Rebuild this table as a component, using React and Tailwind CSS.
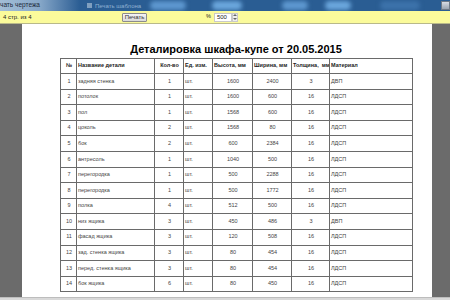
import React from "react";

const rows = [
  ["1", "задняя стенка", "1", "шт.", "1600", "2400", "3", "ДВП"],
  ["2", "потолок", "1", "шт.", "1600", "600", "16", "ЛДСП"],
  ["3", "пол", "1", "шт.", "1568", "600", "16", "ЛДСП"],
  ["4", "цоколь", "2", "шт.", "1568", "80", "16", "ЛДСП"],
  ["5", "бок", "2", "шт.", "600", "2384", "16", "ЛДСП"],
  ["6", "антресоль", "1", "шт.", "1040", "500", "16", "ЛДСП"],
  ["7", "перегородка", "1", "шт.", "500", "2288", "16", "ЛДСП"],
  ["8", "перегородка", "1", "шт.", "500", "1772", "16", "ЛДСП"],
  ["9", "полка", "4", "шт.", "512", "500", "16", "ЛДСП"],
  ["10", "низ ящика", "3", "шт.", "450", "486", "3", "ДВП"],
  ["11", "фасад ящика", "3", "шт.", "120", "508", "16", "ЛДСП"],
  ["12", "зад. стенка ящика", "3", "шт.", "80", "454", "16", "ЛДСП"],
  ["13", "перед. стенка ящика", "3", "шт.", "80", "454", "16", "ЛДСП"],
  ["14", "бок ящика", "6", "шт.", "80", "450", "16", "ЛДСП"],
];

const widths = [16, 78, 29, 29, 40, 39, 38, 83];
const align = ["text-center", "text-left", "text-center", "text-left", "text-center", "text-center", "text-center", "text-left"];

export default function App() {
  return (
    <div className="w-[450px] h-[300px] overflow-hidden flex flex-col font-['Liberation_Sans',Arial,sans-serif] bg-white">
      {/* window title bar */}
      <div className="h-[11px] shrink-0 relative flex items-center bg-[#2a5d93] overflow-hidden">
        <div className="absolute left-0 top-0 w-[80px] h-[11px] bg-linear-to-r from-[#a3bdd6] via-[#86a7c8] to-[#2a5d93]" />
        <div className="absolute left-[150px] top-[1px] w-[36px] h-[9px] rounded-full bg-[#5d97cf] blur-[2px]" />
        <div className="absolute left-[212px] top-[1px] w-[30px] h-[9px] rounded-full bg-[#6aa6dc] blur-[2px]" />
        <div className="absolute left-[282px] top-[1px] w-[26px] h-[9px] rounded-full bg-[#5d97cf] blur-[2px]" />
        <div className="absolute left-[325px] top-[1px] w-[26px] h-[9px] rounded-full bg-[#6aa6dc] blur-[2px]" />
        <div className="absolute left-[380px] top-[1px] w-[40px] h-[9px] rounded-full bg-[#3c72aa] blur-[2px]" />
        <span className="relative text-[6.5px] leading-none text-[#1d2a3a]">чать чертежа</span>
        <span className="relative ml-[47px] flex items-center gap-[3px] text-[6px] leading-none text-[#8fb1d2]">
          <span className="w-[5px] h-[5px] bg-[#7f9fbf]" />
          Печать шаблона
        </span>
        <div className="absolute right-0 top-[1px] w-[9px] h-[9px] bg-linear-to-b from-[#d8dde4] to-[#9aa4b0] border border-[#6f7a86]" />
      </div>
      {/* yellow toolbar */}
      <div className="h-[13px] shrink-0 bg-[#fbfb9b] border-b border-[#b9b98a] flex items-center text-[6px] text-[#222] leading-none">
        <span className="ml-[3px] w-[119px]">4 стр. из 4</span>
        <div className="w-[25px] h-[9px] flex items-center justify-center bg-linear-to-b from-[#f4f4f4] to-[#dadada] border border-[#8c8c8c] rounded-[1px] text-[6px] text-[#333]">
          Печать
        </div>
        <span className="ml-[59px] text-[5.5px]">%</span>
        <div className="ml-[3px] w-[18px] h-[9px] bg-white border border-[#c9c9c9] flex items-center pl-[2px] text-[6px]">500</div>
        <div className="w-[6px] h-[9px] flex flex-col border border-[#c9c9c9] bg-[#eeeeee]">
          <div className="flex-1 flex items-center justify-center">
            <svg width="4" height="2" viewBox="0 0 4 2"><path d="M0 2 L2 0 L4 2 Z" fill="#666" /></svg>
          </div>
          <div className="flex-1 flex items-center justify-center">
            <svg width="4" height="2" viewBox="0 0 4 2"><path d="M0 0 L2 2 L4 0 Z" fill="#666" /></svg>
          </div>
        </div>
      </div>
      {/* main area */}
      <div className="flex-1 flex min-h-0">
        <div className="w-[22px] bg-[#6b6b6b]" />
        <div className="flex-1 bg-white pt-[19px] pl-[38px]">
          <div className="w-[352px]">
            <div className="h-[12px] leading-[12px] text-center text-[11px] font-bold text-black">
              Деталировка шкафа-купе от 20.05.2015
            </div>
            <table className="mt-[3px] border-collapse table-fixed w-[352px]">
              <colgroup>
                {widths.map((w, i) => (
                  <col key={i} style={{ width: w }} />
                ))}
              </colgroup>
              <thead>
                <tr className="h-[15px]">
                  {["№", "Название детали", "Кол-во", "Ед. изм.", "Высота, мм", "Ширина, мм", "Толщина,  мм", "Материал"].map((h, i) => (
                    <th
                      key={i}
                      className={`border border-[#6a6a6a] p-0 pl-[1px] text-[5.5px] leading-none font-bold text-[#222] whitespace-pre overflow-hidden ${i === 0 || i === 2 ? "text-center" : "text-left"}`}
                    >
                      {h}
                    </th>
                  ))}
                </tr>
              </thead>
              <tbody>
                {rows.map((r, ri) => (
                  <tr key={ri} className="h-[15.6px]">
                    {r.map((c, ci) => (
                      <td
                        key={ci}
                        className={`border border-[#6a6a6a] p-0 pl-[1px] text-[5.5px] leading-none text-[#444] whitespace-nowrap overflow-hidden ${align[ci]}`}
                      >
                        {c}
                      </td>
                    ))}
                  </tr>
                ))}
              </tbody>
            </table>
          </div>
        </div>
        <div className="w-[18px] bg-[#6b6b6b]" />
      </div>
      {/* bottom strip */}
      <div className="h-[3px] shrink-0 bg-[#d9d9d9] border-t border-[#bdbdbd]" />
    </div>
  );
}
